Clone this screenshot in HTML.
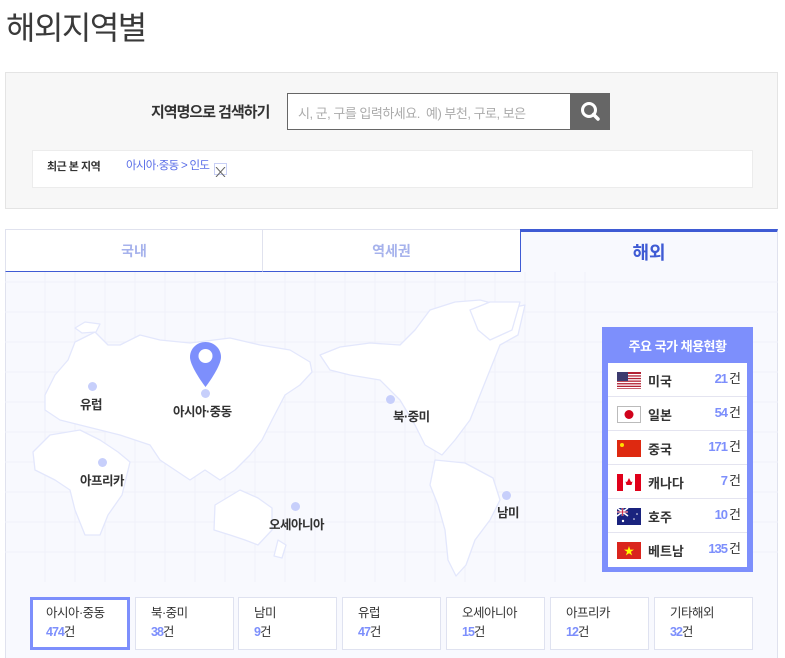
<!DOCTYPE html>
<html><head><meta charset="utf-8"><style>
*{margin:0;padding:0;box-sizing:border-box}
body{width:785px;height:658px;background:#fff;font-family:"Liberation Sans","Noto Sans CJK KR",sans-serif;position:relative;overflow:hidden;color:#333}
.a{position:absolute}
.t{font-size:32px;left:6px;top:3px;letter-spacing:-1.5px;color:#3a3a3a}
.sbox{left:5px;top:72px;width:773px;height:137px;background:#f7f7f7;border:1px solid #e4e4e4}
.inp{left:287px;top:93px;width:284px;height:37px;border:1px solid #666;background:#fff;font-size:13px;color:#aaa;padding:9px 0 0 10px;letter-spacing:-.5px}
.btn{left:570px;top:93px;width:40px;height:37px;background:#666}
.rec{left:32px;top:150px;width:721px;height:38px;background:#fff;border:1px solid #ececec}
.tab{top:229px;height:43px;font-size:14px;font-weight:bold;color:#a6b2ec;text-align:center;padding-top:11px;background:#fff;border:1px solid #e0e2ee;border-bottom:1px solid #3f5bd4}
.map{left:5px;top:271px;width:773px;height:387px;background:#f8f9fe;border-left:1px solid #e0e2ee;border-right:1px solid #e0e2ee}
.lbl{font-size:12.5px;color:#333;letter-spacing:-.5px;font-weight:bold}
.dot{width:9px;height:9px;border-radius:50%;background:#c7cffb}
.panel{left:602px;top:327px;width:151px;height:245px;background:#7d8ffc}
.row{position:absolute;left:6px;width:139px;height:34px;background:#fff;border-bottom:1px solid #e4e4f0;font-size:13px;font-weight:bold}
.row .f{position:absolute;left:9px;top:9px;width:24px;height:17px}
.row .n{position:absolute;left:40px;top:8px}
.row .c{position:absolute;right:6px;top:5px;font-size:13px;font-weight:normal}
.row .c b{color:#7d8ffc;font-weight:bold;letter-spacing:-1px;margin-right:2px}
.bx{top:597px;width:99px;height:53px;background:#fff;border:1px solid #dfe2f0;font-size:12.5px;padding:6px 0 0 15px;letter-spacing:-.5px;line-height:19px}
.bx b{color:#7d8ffc;letter-spacing:-1px}
</style></head><body>
<div class="a t">해외지역별</div>
<div class="a sbox"></div>
<div class="a" style="left:151px;top:101px;font-size:15px;letter-spacing:-1px;color:#333;font-weight:bold">지역명으로 검색하기</div>
<div class="a inp">시, 군, 구를 입력하세요.&nbsp; 예) 부천, 구로, 보은</div>
<div class="a btn"><svg width="40" height="37"><circle cx="19" cy="17" r="6.5" fill="none" stroke="#fff" stroke-width="3"/><line x1="23.5" y1="21.5" x2="28" y2="26" stroke="#fff" stroke-width="3.5" stroke-linecap="round"/></svg></div>
<div class="a rec"></div>
<div class="a" style="left:47px;top:158px;font-size:11px;color:#333;letter-spacing:-.5px;font-weight:bold">최근 본 지역</div>
<div class="a" style="left:126px;top:157px;font-size:11.5px;color:#5a6ee8;letter-spacing:-.7px">아시아·중동 &gt; 인도</div>
<div class="a" style="left:214px;top:163px;width:13px;height:12px;border:1px solid #c8cff5;background:#fff"><svg width="11" height="10"><path d="M1 0L10 10M10 0L1 10" stroke="#666" stroke-width="1"/></svg></div>

<div class="a map"></div>
<div class="a tab" style="left:5px;width:258px">국내</div>
<div class="a tab" style="left:262px;width:259px">역세권</div>
<div class="a" style="left:520px;top:229px;width:258px;height:43px;background:#f8f9fe;border-top:3px solid #3f5bd4;border-right:1px solid #e0e2ee;border-left:1px solid #3f5bd4;text-align:center;font-size:18px;font-weight:bold;color:#3f5bd4;padding-top:7px">해외</div>

<svg class="a" style="left:5px;top:272px" width="773" height="310">
<g stroke="#f0f1fa" stroke-width="1">
<path d="M0 10H773M0 40H773M0 70H773M0 100H773M0 130H773M0 160H773M0 190H773M0 220H773M0 250H773M0 280H773"/>
<path d="M40 0V310M70 0V310M100 0V310M130 0V310M160 0V310M190 0V310M220 0V310M250 0V310M280 0V310M310 0V310M340 0V310M370 0V310M400 0V310M430 0V310M460 0V310M490 0V310M520 0V310M550 0V310M580 0V310"/>
</g>
<g transform="translate(-5,-272)" fill="#fff" stroke="#e3e7fc" stroke-width="1.3" stroke-linejoin="round">
<path d="M45 395L55 375L68 360L75 342L95 332L108 345L120 345L140 335L160 340L190 343L230 338L260 345L290 350L310 362L312 372L300 385L285 395L272 420L262 440L250 455L235 470L220 480L205 470L190 480L175 470L160 460L150 445L135 440L120 435L100 430L80 425L60 420L45 410Z"/>
<path d="M33 452L50 435L80 430L100 440L118 452L130 462L122 495L108 515L100 535L85 535L75 510L70 490L55 480L35 470Z"/>
<path d="M215 505L240 490L258 498L272 508L272 530L258 545L245 540L230 535L214 530Z"/>
<path d="M320 355L340 347L370 343L400 345L415 330L430 310L455 302L480 300L510 308L525 305L518 335L500 345L490 370L480 395L470 420L455 440L442 455L425 445L415 425L400 400L380 380L350 375L330 370Z"/>
<path d="M470 310L490 302L520 302L512 330L490 340L478 330Z"/>
<path d="M435 460L465 463L493 478L500 500L490 520L475 540L466 565L456 576L448 560L445 530L438 505L430 485Z"/>
<path d="M75 328L85 322L100 324L96 332L82 333Z"/>
<path d="M278 540L286 545L282 558L274 556Z"/>
</g>
</svg>
<div class="a dot" style="left:88px;top:382px"></div><div class="a lbl" style="left:80px;top:394px">유럽</div>
<div class="a dot" style="left:201px;top:389px"></div><div class="a lbl" style="left:173px;top:401px">아시아·중동</div>
<div class="a dot" style="left:98px;top:458px"></div><div class="a lbl" style="left:80px;top:470px">아프리카</div>
<div class="a dot" style="left:291px;top:502px"></div><div class="a lbl" style="left:269px;top:514px">오세아니아</div>
<div class="a dot" style="left:386px;top:395px"></div><div class="a lbl" style="left:393px;top:406px">북·중미</div>
<div class="a dot" style="left:502px;top:491px"></div><div class="a lbl" style="left:497px;top:502px">남미</div>
<svg class="a" style="left:189px;top:341px" width="33" height="47"><path d="M16.5 1C8 1 1 7.5 1 16C1 26 16.5 46 16.5 46C16.5 46 32 26 32 16C32 7.5 25 1 16.5 1Z" fill="#7d8ffc"/><circle cx="16.5" cy="15" r="7" fill="#fff"/></svg>

<div class="a panel">
<div style="color:#fff;font-size:13px;font-weight:bold;text-align:center;margin-top:9px;letter-spacing:-.5px">주요 국가 채용현황</div>
<div class="row" style="top:36px"><svg class="f" viewBox="0 0 24 17"><rect width="24" height="17" fill="#b22234"/><g fill="#fff"><rect y="2" width="24" height="1.3"/><rect y="4.6" width="24" height="1.3"/><rect y="7.2" width="24" height="1.3"/><rect y="9.8" width="24" height="1.3"/><rect y="12.4" width="24" height="1.3"/><rect y="15" width="24" height="1.3"/></g><rect width="11" height="9" fill="#3c3b6e"/></svg><span class="n">미국</span><span class="c"><b>21</b>건</span></div>
<div class="row" style="top:70px"><svg class="f" viewBox="0 0 24 17"><rect x=".5" y=".5" width="23" height="16" fill="#fff" stroke="#bbb"/><circle cx="12" cy="8.5" r="4.5" fill="#d0021b"/></svg><span class="n">일본</span><span class="c"><b>54</b>건</span></div>
<div class="row" style="top:104px"><svg class="f" viewBox="0 0 24 17"><rect width="24" height="17" fill="#de2910"/><circle cx="5" cy="5" r="2" fill="#ffde00"/></svg><span class="n">중국</span><span class="c"><b>171</b>건</span></div>
<div class="row" style="top:138px"><svg class="f" viewBox="0 0 24 17"><rect width="24" height="17" fill="#fff"/><rect width="6" height="17" fill="#e0001a"/><rect x="18" width="6" height="17" fill="#e0001a"/><path d="M12 4L14 8L15.5 7.5L14.5 11H9.5L8.5 7.5L10 8Z" fill="#e0001a"/></svg><span class="n">캐나다</span><span class="c"><b>7</b>건</span></div>
<div class="row" style="top:172px"><svg class="f" viewBox="0 0 24 17"><rect width="24" height="17" fill="#1a237e"/><path d="M0 0L11 8M11 0L0 8M5.5 0V8M0 4H11" stroke="#fff" stroke-width="1.6"/><path d="M5.5 0V8M0 4H11" stroke="#c8102e" stroke-width=".8"/><circle cx="17" cy="11" r=".8" fill="#fff"/><circle cx="20" cy="6" r=".8" fill="#fff"/><circle cx="6" cy="13" r="1.2" fill="#fff"/></svg><span class="n">호주</span><span class="c"><b>10</b>건</span></div>
<div class="row" style="top:206px;border-bottom:none"><svg class="f" viewBox="0 0 24 17"><rect width="24" height="17" fill="#da251d"/><path d="M12 4L13.2 7.6H17L13.9 9.8L15.1 13.4L12 11.2L8.9 13.4L10.1 9.8L7 7.6H10.8Z" fill="#ff0"/></svg><span class="n">베트남</span><span class="c"><b>135</b>건</span></div>
</div>

<div class="a bx" style="left:30px;width:100px;border:3px solid #7d8ffc;padding:4px 0 0 13px">아시아·중동<br><b>474</b>건</div>
<div class="a bx" style="left:135px">북·중미<br><b>38</b>건</div>
<div class="a bx" style="left:238px">남미<br><b>9</b>건</div>
<div class="a bx" style="left:342px">유럽<br><b>47</b>건</div>
<div class="a bx" style="left:446px">오세아니아<br><b>15</b>건</div>
<div class="a bx" style="left:550px">아프리카<br><b>12</b>건</div>
<div class="a bx" style="left:654px">기타해외<br><b>32</b>건</div>
</body></html>
